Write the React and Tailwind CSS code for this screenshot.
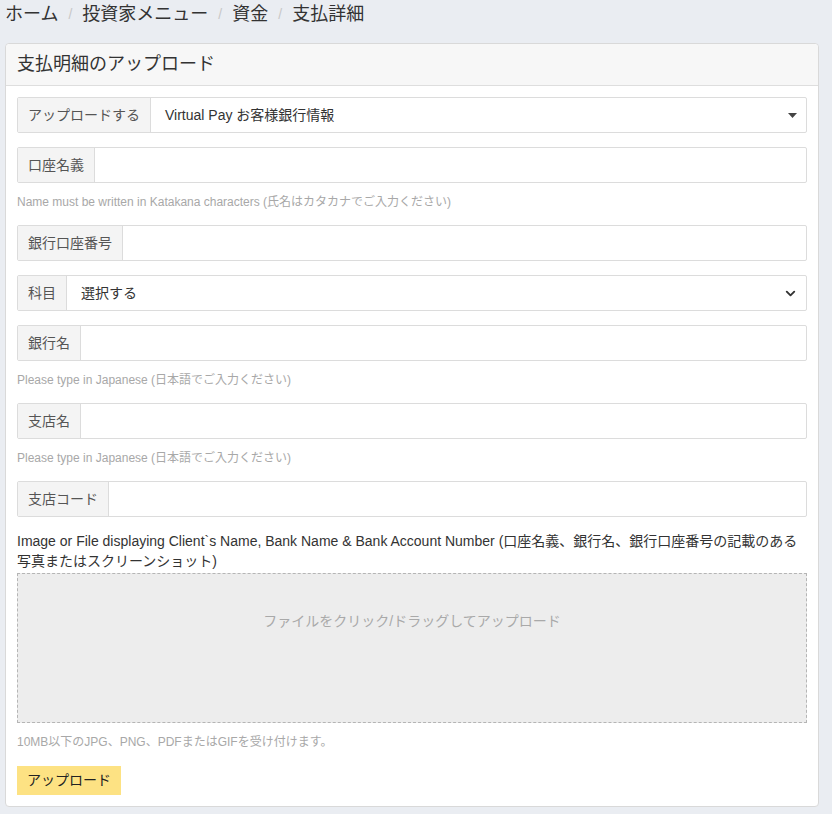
import { ChevronDown } from "lucide-react";

const font = {
  fontFamily: '"Liberation Sans", "Noto Sans CJK JP", sans-serif',
};

function Group({ label, children, help }) {
  return (
    <div className="mb-[14px]">
      <div className="flex h-[36px] border border-[#dcdcdc] rounded-[2px] bg-white text-[14px]">
        <div className="flex items-center px-[10px] bg-[#f4f4f4] border-r border-[#dcdcdc] text-[#555] whitespace-nowrap">
          {label}
        </div>
        <div className="flex-1 flex items-center px-[14px] text-[#333]">{children}</div>
      </div>
      {help && <p className="mt-[10px] text-[12px] leading-[18px] text-[#a8a8a8]">{help}</p>}
    </div>
  );
}

export default function App() {
  const crumbs = ["ホーム", "投資家メニュー", "資金", "支払詳細"];
  return (
    <div className="min-h-[814px] bg-[#eaedf2] px-[5px]" style={font}>
      <nav className="flex items-center h-[28px] text-[18px] text-[#333]">
        {crumbs.map((c, i) => (
          <span key={i} className="flex items-center">
            {i > 0 && <span className="mx-[10px] text-[14px] text-[#c8c8c8]">/</span>}
            {c}
          </span>
        ))}
      </nav>
      <div className="mt-[15px] w-[814px] bg-white border border-[#d9d9d9] rounded-[4px]">
        <div className="h-[42px] flex items-center px-[11px] bg-[#f7f7f7] border-b border-[#dedede] rounded-t-[4px] text-[18px] text-[#333]">
          支払明細のアップロード
        </div>
        <div className="px-[11px] pt-[11px] pb-[11px]">
          <Group label="アップロードする">
            <span className="flex-1">Virtual Pay お客様銀行情報</span>
            <svg width="9" height="5" viewBox="0 0 9 5" className="mr-[-5px]">
              <path d="M0 0h9L4.5 5z" fill="#444" />
            </svg>
          </Group>
          <Group
            label="口座名義"
            help="Name must be written in Katakana characters (氏名はカタカナでご入力ください)"
          />
          <Group label="銀行口座番号" />
          <Group label="科目">
            <span className="flex-1">選択する</span>
            <ChevronDown size={15} strokeWidth={3} className="text-[#333] mr-[-6px]" />
          </Group>
          <Group label="銀行名" help="Please type in Japanese (日本語でご入力ください)" />
          <Group label="支店名" help="Please type in Japanese (日本語でご入力ください)" />
          <Group label="支店コード" />
          <p className="text-[14px] leading-[20px] text-[#333]">
            Image or File displaying Client`s Name, Bank Name &amp; Bank Account Number (口座名義、銀行名、銀行口座番号の記載のある写真またはスクリーンショット)
          </p>
          <div className="mt-[2px] h-[150px] bg-[#ededed] border border-dashed border-[#b5b5b5] flex justify-center pt-[37px] text-[14px] text-[#a9a9a9]">
            ファイルをクリック/ドラッグしてアップロード
          </div>
          <p className="mt-[10px] text-[12px] leading-[18px] text-[#a8a8a8]">
            10MB以下のJPG、PNG、PDFまたはGIFを受け付けます。
          </p>
          <button className="mt-[15px] h-[29px] px-[10px] bg-[#fde283] text-[14px] text-[#222]">
            アップロード
          </button>
        </div>
      </div>
    </div>
  );
}
